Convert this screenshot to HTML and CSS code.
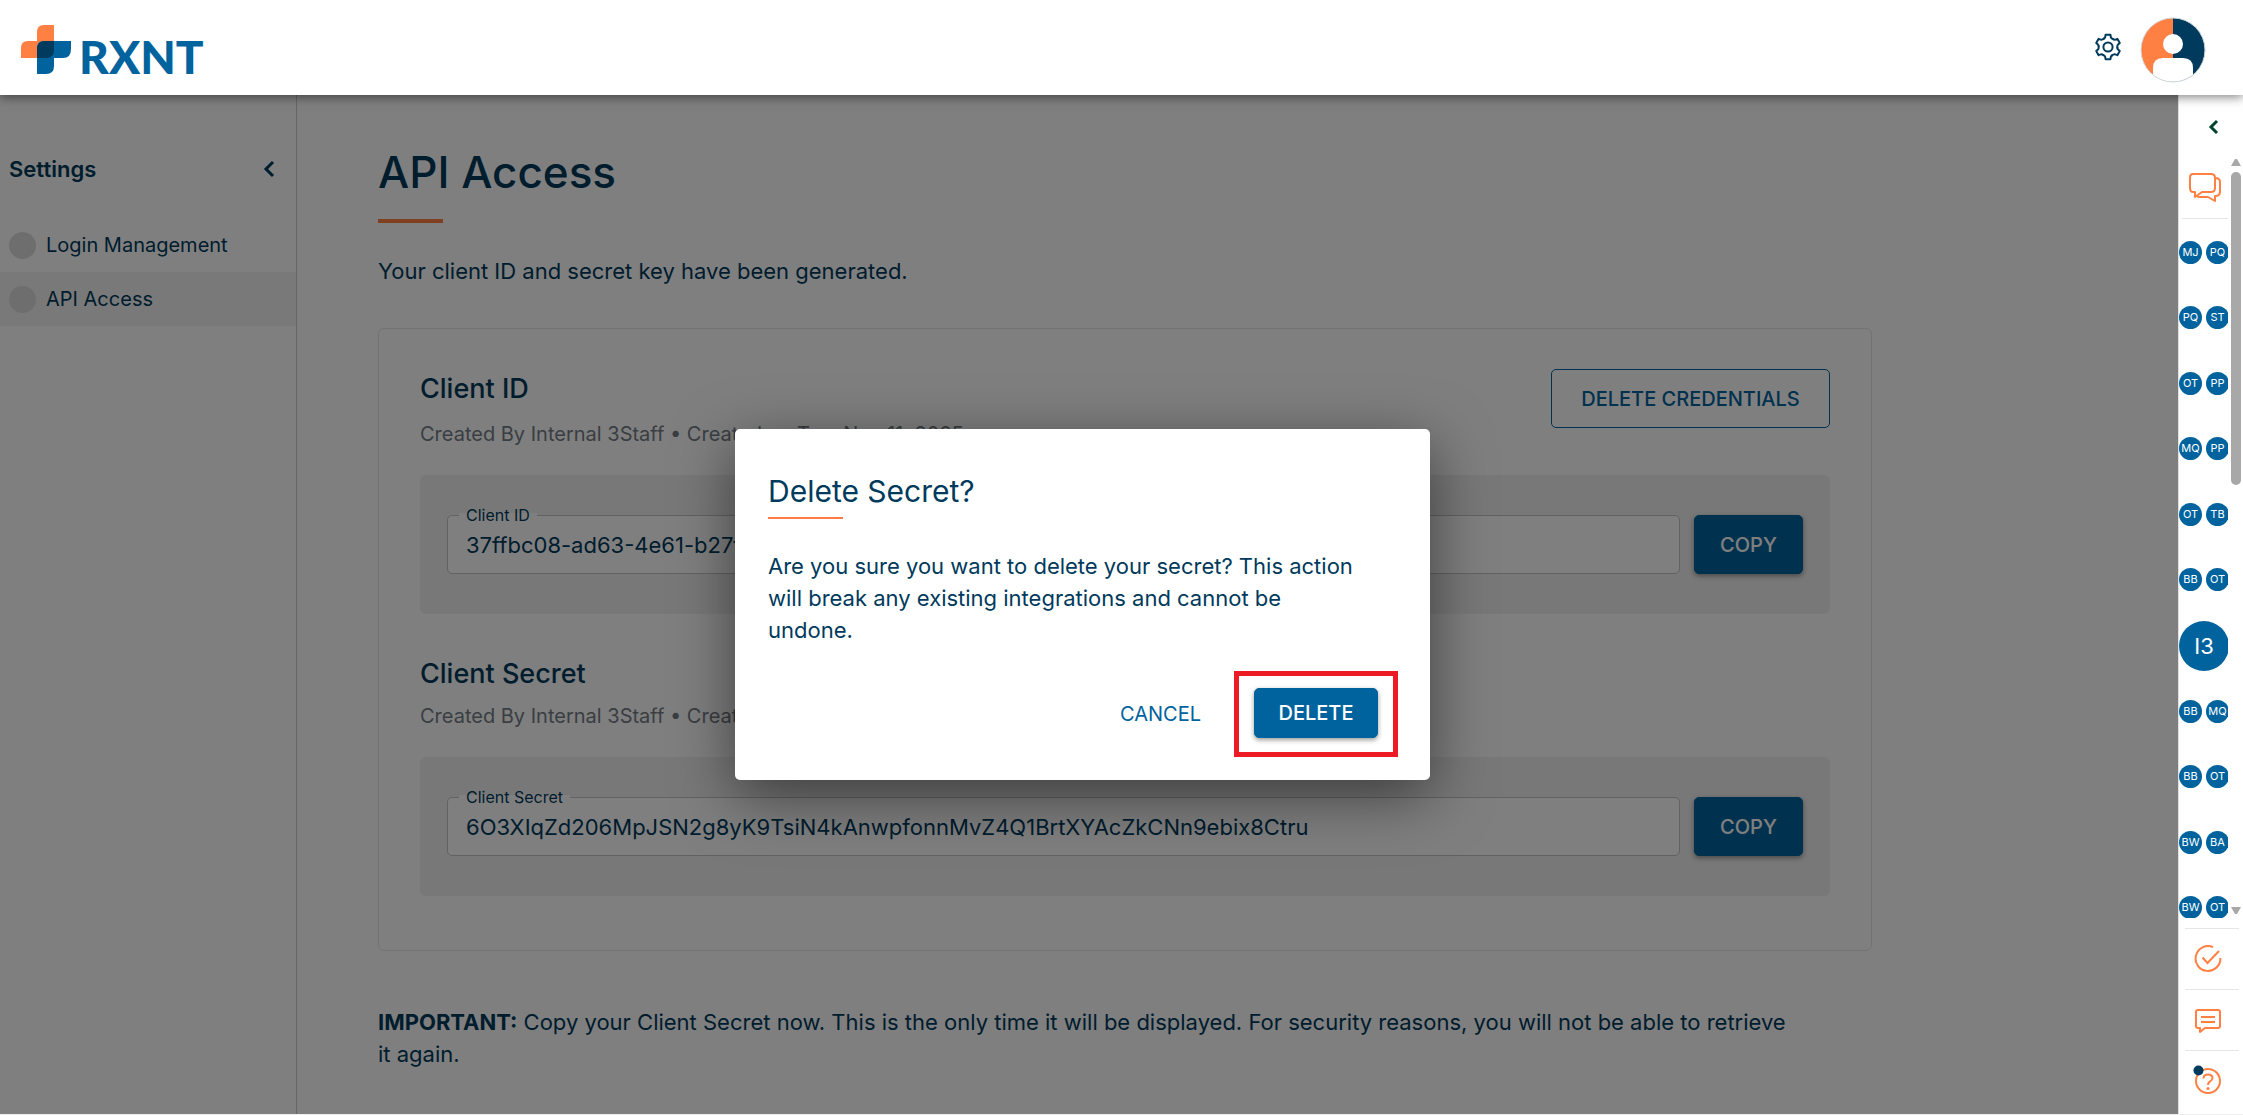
FILE: index.html
```html
<!DOCTYPE html>
<html lang="en">
  <head>
    <meta charset="UTF-8" />
    <meta name="viewport" content="width=device-width, initial-scale=1.0" />
    <title>RXNT - API Access</title>
    <link rel="stylesheet" href="styles.css">
  </head>
  <body>
    <header class="header">
      <a href="#" class="logo">
        <svg width="50" height="50" viewBox="0 0 50 50" aria-hidden="true">
          <path fill="#ff8042" d="M16 16V7q0-7 7-7h10v33H0V23q0-7 7-7z" />
          <path fill="#00639e" d="M16 49V23q0-7 7-7h27v8q0 9-8 9h-9v8q0 8-8 8z" />
          <path fill="#003a5c" d="M16 33V24q0-8 8-8h9v9q0 8-8 8z" />
        </svg>
        <span>RXNT</span>
      </a>
      <button class="icon-btn" aria-label="Settings">
        <svg width="28" height="32" viewBox="-14 -14 28 32" fill="none" stroke="#003a5c" stroke-width="2" stroke-linejoin="round" stroke-linecap="round">
          <path id="tooth" d="M-4 -8.5Q-3 -9 -2.8 -10L-2.4 -12.2H2.4L2.8 -10Q3 -9 4 -8.5Q5 -7.8 5.4 -7.7" />
          <use href="#tooth" transform="rotate(60)" />
          <use href="#tooth" transform="rotate(120)" />
          <use href="#tooth" transform="rotate(180)" />
          <use href="#tooth" transform="rotate(240)" />
          <use href="#tooth" transform="rotate(300)" />
          <circle r="4.6" />
        </svg>
      </button>
      <button class="icon-btn" aria-label="Account">
        <svg width="66" height="66" viewBox="0 0 66 66">
          <clipPath id="face"><circle cx="33" cy="34" r="32" /></clipPath>
          <g clip-path="url(#face)">
            <path fill="#ff8042" d="M0 0h33v66H0z" />
            <path fill="#003a5c" d="M33 0h33v66H33z" />
            <circle cx="33" cy="28" r="10" fill="#fff" />
            <path fill="#fff" d="M13 66V52q0-10 10-10h20q10 0 10 10v15z" />
          </g>
          <circle cx="33" cy="34" r="32" fill="none" stroke="#cfd8de" />
        </svg>
      </button>
    </header>

    <div class="page">
      <div class="workspace">
        <nav class="sidebar">
          <div class="sidebar-head">
            <span>Settings</span>
            <button class="icon-btn" aria-label="Collapse settings">
              <svg width="16" height="18" viewBox="0 0 16 18" fill="none" stroke="#003a5c" stroke-width="3"><path d="M13 2L6 9l7 7" /></svg>
            </button>
          </div>
          <a href="#" class="nav-item"><span class="dot"></span>Login Management</a>
          <a href="#" class="nav-item active"><span class="dot"></span>API Access</a>
        </nav>

        <main class="content">
          <h1>API Access</h1>
          <p>Your client ID and secret key have been generated.</p>

          <div class="card">
            <div class="card-head">
              <div>
                <h2>Client ID</h2>
                <div class="created">Created By Internal 3Staff • Created on Tue, Nov 11, 2025</div>
              </div>
              <button class="btn btn-outline">DELETE CREDENTIALS</button>
            </div>
            <div class="panel">
              <div class="field">
                <label for="clientId">Client ID</label>
                <input type="text" id="clientId" value="37ffbc08-ad63-4e61-b27f-5c0d9e18a642" readonly />
              </div>
              <button class="btn">COPY</button>
            </div>

            <h2 class="second">Client Secret</h2>
            <div class="created">Created By Internal 3Staff • Created on Tue, Nov 11, 2025</div>
            <div class="panel">
              <div class="field">
                <label for="clientSecret">Client Secret</label>
                <input type="text" id="clientSecret" value="6O3XIqZd206MpJSN2g8yK9TsiN4kAnwpfonnMvZ4Q1BrtXYAcZkCNn9ebix8Ctru" readonly />
              </div>
              <button class="btn">COPY</button>
            </div>
          </div>

          <p class="important"><b>IMPORTANT:</b> Copy your Client Secret now. This is the only time it will be displayed. For security reasons, you will not be able to retrieve it again.</p>
        </main>

        <!-- confirm dialog -->
        <div class="backdrop">
          <div class="dialog" role="dialog" aria-labelledby="dialogTitle">
            <h3 id="dialogTitle">Delete Secret?</h3>
            <p>Are you sure you want to delete your secret? This action will break any existing integrations and cannot be undone.</p>
            <div class="dialog-actions">
              <button class="btn-text">CANCEL</button>
              <div class="highlight"><button class="btn btn-delete">DELETE</button></div>
            </div>
          </div>
        </div>
      </div>

      <aside class="rail">
        <button class="icon-btn rail-toggle" aria-label="Expand panel">
          <svg width="12" height="16" viewBox="0 0 12 16" fill="none" stroke="#00452b" stroke-width="3"><path d="M10 2L4 8l6 6" /></svg>
        </button>
        <div class="rail-main">
          <div class="rail-col">
            <button class="icon-btn rail-chat" aria-label="Messages">
              <svg width="32" height="30" viewBox="0 0 32 30" fill="none" stroke="#ff8042" stroke-width="2" stroke-linejoin="round">
                <path d="M4 1H22q4 0 4 4V15q0 4-4 4H13L6 24V19H4q-3 0-3-4V5q0-4 3-4z" />
                <path d="M26 5q5 0 5 4V19q0 4-5 4V28L19 24H11q-2 0-3-1" />
              </svg>
            </button>
            <div class="rail-list">
              <div class="rail-rows">
                <div class="rail-row"><span>MJ</span><span>PQ</span></div>
                <div class="rail-row"><span>PQ</span><span>ST</span></div>
                <div class="rail-row"><span>OT</span><span>PP</span></div>
                <div class="rail-row"><span>MQ</span><span>PP</span></div>
                <div class="rail-row"><span>OT</span><span>TB</span></div>
                <div class="rail-row"><span>BB</span><span>OT</span></div>
                <div class="rail-row"><span class="big">I3</span></div>
                <div class="rail-row"><span>BB</span><span>MQ</span></div>
                <div class="rail-row"><span>BB</span><span>OT</span></div>
                <div class="rail-row"><span>BW</span><span>BA</span></div>
                <div class="rail-row"><span>BW</span><span>OT</span></div>
              </div>
            </div>
          </div>
          <div class="scrollbar">
            <svg width="10" height="7" viewBox="0 0 10 7"><path fill="#a8a8a8" d="M0 7L4 0h2l4 7z" /></svg>
            <div class="track"><div class="thumb"></div></div>
            <svg width="10" height="7" viewBox="0 0 10 7"><path fill="#a8a8a8" d="M0 0h10L6 7H4z" /></svg>
          </div>
        </div>
        <div class="rail-tools">
          <button class="icon-btn" aria-label="Tasks">
            <svg width="28" height="28" viewBox="0 0 28 28" fill="none" stroke="#ff8042" stroke-width="2">
              <path d="M19 2.2A12.4 12.4 0 1 0 26.4 13" />
              <path d="M8.500 12.500L13.500 18L25 6" />
            </svg>
          </button>
          <button class="icon-btn" aria-label="Comments">
            <svg width="28" height="28" viewBox="0 0 28 28" fill="none" stroke="#ff8042" stroke-width="2" stroke-linejoin="round">
              <path d="M4 4H24q2 0 2 2V20q0 2-2 2H11L6 26V22H4q-2 0-2-2V6q0-2 2-2z" />
              <path d="M7 11H21M7 16H21" />
            </svg>
          </button>
          <button class="icon-btn" aria-label="Help">
            <svg width="28" height="28" viewBox="0 0 28 28" fill="none" stroke="#ff8042" stroke-width="2">
              <circle cx="14" cy="14" r="12" />
              <path d="M9.500 11.500Q9.500 7.500 14 7.500Q18.500 7.500 18.500 11Q18.500 13 16 14.500Q14 15.600 14 18" />
              <circle cx="14" cy="21.500" r="1.500" fill="#ff8042" stroke="none" />
              <circle cx="4.500" cy="3.500" r="5" fill="#003a5c" stroke="none" />
            </svg>
          </button>
        </div>
      </aside>
    </div>
  </body>
</html>
```

FILE: styles.css
```css
* {
  box-sizing: border-box;
}
body {
  font-family: Inter, "Open Sans", sans-serif;
  font-size: 22px;
  line-height: 32px;
  margin: 0;
  min-height: 100vh;
  display: flex;
  flex-direction: column;
  color: #003a5c;
  background-color: #fff;
}
h1,
h2,
h3,
p {
  margin: 0;
}
button,
input {
  font-family: inherit;
  color: inherit;
}
a {
  color: inherit;
  text-decoration: none;
}
svg {
  display: block;
  flex: none;
  overflow: visible;
}
.icon-btn {
  background: none;
  border: none;
  padding: 0;
  cursor: pointer;
}

/* top bar */
.header {
  position: relative;
  z-index: 2;
  height: 95px;
  padding: 2px 37px 0 21px;
  display: flex;
  align-items: center;
  gap: 18px;
  background-color: #fff;
  box-shadow: 0 2px 10px rgba(0, 0, 0, 0.5);
}
.logo {
  display: flex;
  align-items: center;
  gap: 8px;
  margin-right: auto;
  font-family: Lato, sans-serif;
  font-size: 46px;
  font-weight: 900;
  color: #00639e;
}
.logo svg {
  margin-top: 3px;
}
.logo span {
  padding-top: 16px;
}

.page {
  flex: 1;
  display: flex;
  border-bottom: 1px solid #eee;
}
.workspace {
  position: relative;
  flex: 1;
  display: flex;
}

/* sidebar */
.sidebar {
  width: 297px;
  flex: none;
  border-right: 1px solid #ccc;
  padding-top: 58px;
}
.sidebar-head {
  display: flex;
  justify-content: space-between;
  align-items: center;
  padding: 0 20px 0 9px;
  margin-bottom: 33px;
  font-size: 22px;
  font-weight: 600;
}
.nav-item {
  display: flex;
  align-items: center;
  gap: 10px;
  height: 54px;
  padding-left: 9px;
  font-size: 20px;
}
.nav-item.active {
  background-color: #f2f2f2;
}
.dot {
  width: 27px;
  height: 27px;
  border-radius: 50%;
  background-color: #dcdcdc;
}

/* content */
.content {
  flex: 1;
  max-width: 1575px;
  padding: 50px 0 42px 81px;
}
h1 {
  font-size: 44px;
  line-height: 54px;
  font-weight: 500;
  margin-bottom: 32px;
}
h1::after {
  content: "";
  display: block;
  width: 65px;
  height: 4px;
  margin-top: 20px;
  background-color: #ff8042;
}
.card {
  margin: 41px 0 55px;
  padding: 40px 41px 54px;
  border: 1px solid #e5e5e5;
  border-radius: 6px;
}
.card-head {
  display: flex;
  justify-content: space-between;
  align-items: flex-start;
}
h2 {
  font-size: 27px;
  line-height: 40px;
  font-weight: 500;
  margin-bottom: 7px;
}
.card-head h2 {
  margin-bottom: 10px;
}
h2.second {
  margin-top: 40px;
}
.created {
  font-size: 20px;
  line-height: 30px;
  color: #757d85;
}
.panel {
  display: flex;
  gap: 14px;
  margin-top: 26px;
  padding: 40px 27px;
  background-color: #f0f0f0;
  border-radius: 6px;
}
.field {
  position: relative;
  flex: 1;
}
.field label {
  position: absolute;
  left: 12px;
  top: -10px;
  padding: 0 7px;
  font-size: 16px;
  line-height: 20px;
  background: linear-gradient(#fff, #fff) center / 100% 4px no-repeat;
}
.field input {
  width: 100%;
  height: 59px;
  padding: 0 18px;
  font-size: 22px;
  background-color: #fff;
  border: 1px solid #c4c4c4;
  border-radius: 5px;
  outline: none;
}
.important {
  padding-right: 80px;
}
.btn {
  min-width: 109px;
  height: 59px;
  padding: 0 21px;
  font-size: 20px;
  font-weight: 500;
  color: #fff;
  background-color: #00639e;
  border: 1px solid #00639e;
  border-radius: 5px;
  box-shadow: 0 2px 5px rgba(0, 0, 0, 0.4);
  cursor: pointer;
}
.btn-outline {
  min-width: 279px;
  color: #00639e;
  background: none;
  box-shadow: none;
}

/* dialog */
.backdrop {
  position: absolute;
  inset: 0;
  display: flex;
  align-items: center;
  justify-content: center;
  padding-right: 13px;
  background-color: rgba(0, 0, 0, 0.5);
}
.dialog {
  width: 695px;
  padding: 46px 32px 23px 33px;
  background-color: #fff;
  border-radius: 5px;
  box-shadow: 0 16px 60px rgba(0, 0, 0, 0.5);
}
.dialog h3 {
  font-size: 30px;
  line-height: 32px;
  font-weight: 400;
  margin-bottom: 31px;
}
.dialog h3::after {
  content: "";
  display: block;
  width: 75px;
  height: 2px;
  margin-top: 10px;
  background-color: #ff7a45;
}
.dialog p {
  padding-right: 32px;
  margin-bottom: 25px;
}
.dialog-actions {
  display: flex;
  justify-content: flex-end;
  align-items: center;
  gap: 17px;
}
.btn-text {
  padding: 8px 16px;
  font-size: 20px;
  color: #00639e;
  background: none;
  border: none;
  cursor: pointer;
}
.highlight {
  padding: 12px 15px 14px;
  border: 5px solid #ed1c24;
}
.btn-delete {
  display: block;
  min-width: 124px;
  height: 50px;
}

/* right rail */
.rail {
  width: 65px;
  flex: none;
  display: flex;
  flex-direction: column;
  border-left: 1px solid #e0e0e0;
}
.rail-toggle {
  align-self: flex-end;
  margin: 24px 24px 24px 0;
}
.rail-main {
  flex: 1;
  display: flex;
  gap: 3px;
}
.rail-col {
  width: 49px;
  display: flex;
  flex-direction: column;
}
.rail-chat {
  height: 60px;
  margin-left: 3px;
  padding: 0 0 2px 7px;
  border-bottom: 1px solid #e5e5e5;
}
.rail-list {
  flex: 1;
  overflow: hidden;
}
.rail-rows {
  height: calc(100% + 15px);
  padding-top: 8px;
  display: flex;
  flex-direction: column;
  justify-content: space-between;
}
.rail-row {
  height: 50px;
  display: flex;
  align-items: center;
  gap: 4px;
}
.rail-row span {
  flex: none;
  width: 23px;
  height: 23px;
  border-radius: 50%;
  font-size: 11px;
  line-height: 23px;
  text-align: center;
  color: #fff;
  background-color: #00639e;
}
.rail-row .big {
  width: 50px;
  height: 50px;
  font-size: 22px;
  line-height: 50px;
}
.scrollbar {
  width: 10px;
  display: flex;
  flex-direction: column;
  gap: 6px;
  padding-bottom: 4px;
}
.track {
  flex: 1;
}
.thumb {
  height: 43%;
  border-radius: 5px;
  background-color: #a8a8a8;
}
.rail-tools {
  padding: 10px 4px 3px 6px;
}
.rail-tools button {
  display: flex;
  align-items: center;
  justify-content: center;
  width: 100%;
  height: 61px;
  padding-right: 8px;
  border-top: 1px solid #e5e5e5;
}
```
